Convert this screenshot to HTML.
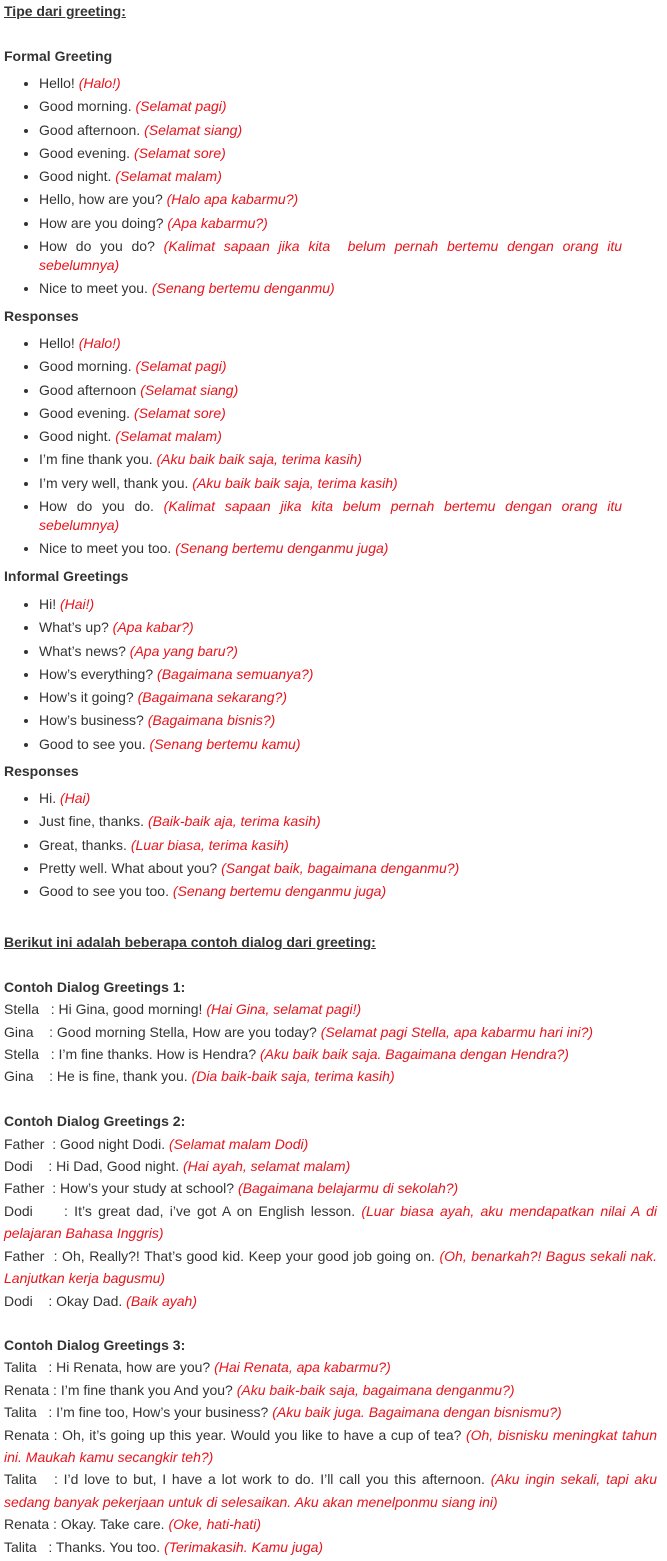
<!DOCTYPE html>
<html><head><meta charset="utf-8"><style>
body{margin:0;background:#fff;width:667px;height:1561px;position:relative;font-family:"Liberation Sans",Arial,sans-serif;font-size:14px;color:#333;}
.b{position:absolute;left:4px;width:653px;}
h{display:block;font-weight:bold;line-height:19px;}
u{font-weight:bold}
ul{margin:0;padding:0 0 0 35px;width:583px;}
li{line-height:19px;margin-bottom:4.3px;text-align:justify;}
i{color:#e8141c;}
.d p{margin:0;line-height:22.4px;text-align:justify;}
</style></head><body>
<div class="b" style="top:2px;line-height:19px"><u>Tipe dari greeting:</u></div>
<div class="b" style="top:47px"><h>Formal Greeting</h></div>
<div class="b" style="top:74px"><ul>
<li>Hello! <i>(Halo!)</i></li>
<li>Good morning. <i>(Selamat pagi)</i></li>
<li>Good afternoon. <i>(Selamat siang)</i></li>
<li>Good evening. <i>(Selamat sore)</i></li>
<li>Good night. <i>(Selamat malam)</i></li>
<li>Hello, how are you? <i>(Halo apa kabarmu?)</i></li>
<li>How are you doing? <i>(Apa kabarmu?)</i></li>
<li>How do you do? <i>(Kalimat sapaan jika kita &nbsp;belum pernah bertemu dengan orang itu sebelumnya)</i></li>
<li>Nice to meet you. <i>(Senang bertemu denganmu)</i></li>
</ul></div>
<div class="b" style="top:307px"><h>Responses</h></div>
<div class="b" style="top:334px"><ul>
<li>Hello! <i>(Halo!)</i></li>
<li>Good morning. <i>(Selamat pagi)</i></li>
<li>Good afternoon <i>(Selamat siang)</i></li>
<li>Good evening. <i>(Selamat sore)</i></li>
<li>Good night. <i>(Selamat malam)</i></li>
<li>I’m fine thank you. <i>(Aku baik baik saja, terima kasih)</i></li>
<li>I’m very well, thank you. <i>(Aku baik baik saja, terima kasih)</i></li>
<li>How do you do. <i>(Kalimat sapaan jika kita belum pernah bertemu dengan orang itu sebelumnya)</i></li>
<li>Nice to meet you too. <i>(Senang bertemu denganmu juga)</i></li>
</ul></div>
<div class="b" style="top:567px"><h>Informal Greetings</h></div>
<div class="b" style="top:595px"><ul>
<li>Hi! <i>(Hai!)</i></li>
<li>What’s up? <i>(Apa kabar?)</i></li>
<li>What’s news? <i>(Apa yang baru?)</i></li>
<li>How’s everything? <i>(Bagaimana semuanya?)</i></li>
<li>How’s it going? <i>(Bagaimana sekarang?)</i></li>
<li>How’s business? <i>(Bagaimana bisnis?)</i></li>
<li>Good to see you. <i>(Senang bertemu kamu)</i></li>
</ul></div>
<div class="b" style="top:762px"><h>Responses</h></div>
<div class="b" style="top:789px"><ul>
<li>Hi. <i>(Hai)</i></li>
<li>Just fine, thanks. <i>(Baik-baik aja, terima kasih)</i></li>
<li>Great, thanks. <i>(Luar biasa, terima kasih)</i></li>
<li>Pretty well. What about you? <i>(Sangat baik, bagaimana denganmu?)</i></li>
<li>Good to see you too. <i>(Senang bertemu denganmu juga)</i></li>
</ul></div>
<div class="b d" style="top:931px">
<p><u>Berikut ini adalah beberapa contoh dialog dari greeting:</u></p>
<p>&nbsp;</p>
<p><b>Contoh Dialog Greetings 1:</b></p>
<p>Stella &nbsp; : Hi Gina, good morning! <i>(Hai Gina, selamat pagi!)</i></p>
<p>Gina &nbsp; &nbsp;: Good morning Stella, How are you today? <i>(Selamat pagi Stella, apa kabarmu hari ini?)</i></p>
<p>Stella &nbsp; : I’m fine thanks. How is Hendra? <i>(Aku baik baik saja. Bagaimana dengan Hendra?)</i></p>
<p>Gina &nbsp; &nbsp;: He is fine, thank you. <i>(Dia baik-baik saja, terima kasih)</i></p>
<p>&nbsp;</p>
<p><b>Contoh Dialog Greetings 2:</b></p>
<p>Father &nbsp;: Good night Dodi. <i>(Selamat malam Dodi)</i></p>
<p>Dodi &nbsp; &nbsp;: Hi Dad, Good night. <i>(Hai ayah, selamat malam)</i></p>
<p>Father &nbsp;: How’s your study at school? <i>(Bagaimana belajarmu di sekolah?)</i></p>
<p>Dodi &nbsp; &nbsp; : It’s great dad, i’ve got A on English lesson. <i>(Luar biasa ayah, aku mendapatkan nilai A di pelajaran Bahasa Inggris)</i></p>
<p>Father &nbsp;: Oh, Really?! That’s good kid. Keep your good job going on. <i>(Oh, benarkah?! Bagus sekali nak. Lanjutkan kerja bagusmu)</i></p>
<p>Dodi &nbsp; &nbsp;: Okay Dad. <i>(Baik ayah)</i></p>
</div>
<div class="b d" style="top:1334px">
<p><b>Contoh Dialog Greetings 3:</b></p>
<p>Talita &nbsp; : Hi Renata, how are you? <i>(Hai Renata, apa kabarmu?)</i></p>
<p>Renata : I’m fine thank you And you? <i>(Aku baik-baik saja, bagaimana denganmu?)</i></p>
<p>Talita &nbsp; : I’m fine too, How’s your business? <i>(Aku baik juga. Bagaimana dengan bisnismu?)</i></p>
<p>Renata : Oh, it’s going up this year. Would you like to have a cup of tea? <i>(Oh, bisnisku meningkat tahun ini. Maukah kamu secangkir teh?)</i></p>
<p>Talita &nbsp; : I’d love to but, I have a lot work to do. I’ll call you this afternoon. <i>(Aku ingin sekali, tapi aku sedang banyak pekerjaan untuk di selesaikan. Aku akan menelponmu siang ini)</i></p>
<p>Renata : Okay. Take care. <i>(Oke, hati-hati)</i></p>
<p>Talita &nbsp; : Thanks. You too. <i>(Terimakasih. Kamu juga)</i></p>
</div>
</body></html>
